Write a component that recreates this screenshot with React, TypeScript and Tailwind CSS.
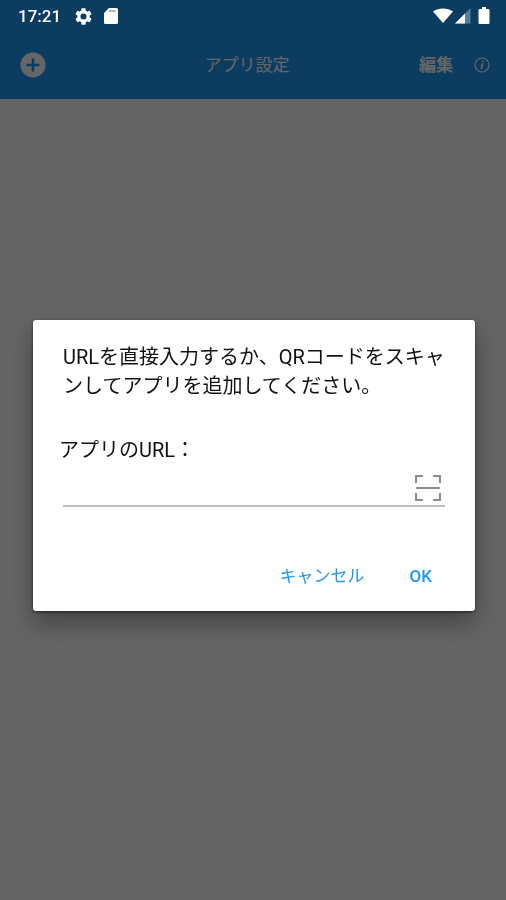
import { useState } from 'react'

function SignalIcon() {
  return (
    <svg viewBox="0 0 16 16" className="size-4" aria-hidden="true">
      <path d="M15.500 0v15.500H0z" fill="#54829c" />
      <path d="M10 5.500v10H0z" fill="#fff" />
    </svg>
  )
}

function StatusBar() {
  return (
    <div className="relative z-20 flex h-8 items-center justify-between pr-[15px] pl-[18px] text-white">
      <div className="flex items-center">
        <span className="w-[57px] text-[17px] leading-8 font-medium">17:21</span>
        <svg viewBox="2 2 20 20" className="size-[17px]" fill="currentColor" aria-hidden="true">
          <path d="M19.14 12.94c.04-.3.06-.61.06-.94s-.02-.64-.07-.94l2.03-1.58a.49.49 0 0 0 .12-.61l-1.92-3.32a.49.49 0 0 0-.59-.22l-2.39.96a7 7 0 0 0-1.62-.94l-.36-2.54a.48.48 0 0 0-.48-.41h-3.84a.48.48 0 0 0-.47.41l-.36 2.54a7.4 7.4 0 0 0-1.62.94l-2.39-.96a.48.48 0 0 0-.59.22L2.74 8.87a.48.48 0 0 0 .12.61l2.03 1.58a6 6 0 0 0 0 1.88l-2.03 1.58a.49.49 0 0 0-.12.61l1.92 3.32c.12.22.37.29.59.22l2.39-.96c.5.38 1.03.7 1.62.94l.36 2.54c.05.24.24.41.48.41h3.84c.24 0 .44-.17.47-.41l.36-2.54a7 7 0 0 0 1.62-.94l2.39.96c.22.08.47 0 .59-.22l1.92-3.32a.47.47 0 0 0-.12-.61zM12 15.6a3.6 3.6 0 1 1 0-7.2 3.6 3.6 0 0 1 0 7.2z" />
        </svg>
        <svg viewBox="0 0 14 16" className="ml-3 h-4 w-3.5" aria-hidden="true">
          <path d="M5 0h7.500Q14 0 14 1.500v13q0 1.500-1.500 1.500h-11Q0 16 0 14.500V5z" fill="#fff" />
          <path d="M5 3h6.500" stroke="#8e9aad" strokeWidth="1.500" />
        </svg>
      </div>
      <div className="flex items-center">
        <svg viewBox="0 0 20 16" className="h-4 w-5" fill="currentColor" aria-hidden="true">
          <path d="M10 15 0 3.500C5.500-.6 14.500-.6 20 3.500z" />
        </svg>
        <span className="ml-0.5">
          <SignalIcon />
        </span>
        <svg viewBox="0 0 14 18" className="ml-1.5 h-[18px] w-3.5" fill="currentColor" aria-hidden="true">
          <path d="M5 0h4v2h2.500q1 0 1 1v13q0 1-1 1h-9q-1 0-1-1V3q0-1 1-1H5z" />
        </svg>
      </div>
    </div>
  )
}

function Toolbar() {
  return (
    <header className="grid h-[67px] grid-cols-[1fr_auto_1fr] items-center pr-4 pb-0.5 pl-5 text-white">
      <button type="button" aria-label="追加" className="size-[26px]">
        <svg viewBox="0 0 26 26" className="size-[26px]" aria-hidden="true">
          <circle cx="13" cy="13" r="12.500" fill="#fff" />
          <path d="M13 6.500v13M6.500 13h13" stroke="#2196f3" strokeWidth="2.600" />
        </svg>
      </button>
      <h1 className="pr-4 text-[17px] leading-6">アプリ設定</h1>
      <div className="flex items-center justify-end gap-[21px]">
        <button type="button" className="text-[17px] leading-6 font-bold">
          編集
        </button>
        <button type="button" aria-label="情報" className="size-4">
          <svg viewBox="0 0 16 16" className="size-4" fill="none" stroke="currentColor" aria-hidden="true">
            <circle cx="8" cy="8" r="7" strokeWidth="1.200" />
            <path d="M8.700 6.300 7.200 12M9.200 3.800 8.900 5.100" strokeWidth="1.600" />
          </svg>
        </button>
      </div>
    </header>
  )
}

function AddAppDialog() {
  const [url, setUrl] = useState('')

  return (
    <form
      role="dialog"
      aria-modal="true"
      aria-describedby="add-app-message"
      onSubmit={(event) => event.preventDefault()}
      className="w-full rounded-[3px] bg-white px-[30px] pt-[23px] pb-4 text-[#111] shadow-[0_12px_24px_rgba(0,0,0,0.35),0_1px_3px_rgba(0,0,0,0.6)]"
    >
      <p id="add-app-message" className="text-[20px] leading-[29px]">
        URLを直接入力するか、QRコードをスキャンしてアプリを追加してください。
      </p>
      <label htmlFor="app-url" className="mt-9 -ml-1 block text-[20px] leading-[26px]">
        アプリのURL：
      </label>
      <div className="mt-2 flex h-9 items-center border-b-2 border-[#bdbdbd] pr-1">
        <input
          id="app-url"
          type="url"
          value={url}
          onChange={(event) => setUrl(event.target.value)}
          className="min-w-0 flex-1 bg-transparent text-[20px] outline-none"
        />
        <button type="button" aria-label="QRコードをスキャン">
          <svg viewBox="0 0 26 26" className="size-[26px]" fill="none" stroke="#8c8c8c" strokeWidth="2" aria-hidden="true">
            <path d="M1 8V1h7M18 1h7v7M1 18v7h7M18 25h7v-7M1 13h24" />
          </svg>
        </button>
      </div>
      <div className="mt-[52px] flex justify-end gap-8 text-[17px] text-[#2196f3]">
        <button type="button" className="h-9">
          キャンセル
        </button>
        <button type="submit" className="h-9 px-[13px] font-medium">
          OK
        </button>
      </div>
    </form>
  )
}

export default function App() {
  return (
    <div className="min-h-screen bg-[#fafafa] font-[Roboto,'Noto_Sans_CJK_JP',sans-serif]" lang="ja">
      <div className="bg-[#2196f3]">
        <StatusBar />
        <Toolbar />
      </div>
      <div className="fixed inset-0 z-10 flex items-center bg-black/60 pt-[30px] pr-[31px] pl-[33px]">
        <AddAppDialog />
      </div>
    </div>
  )
}
